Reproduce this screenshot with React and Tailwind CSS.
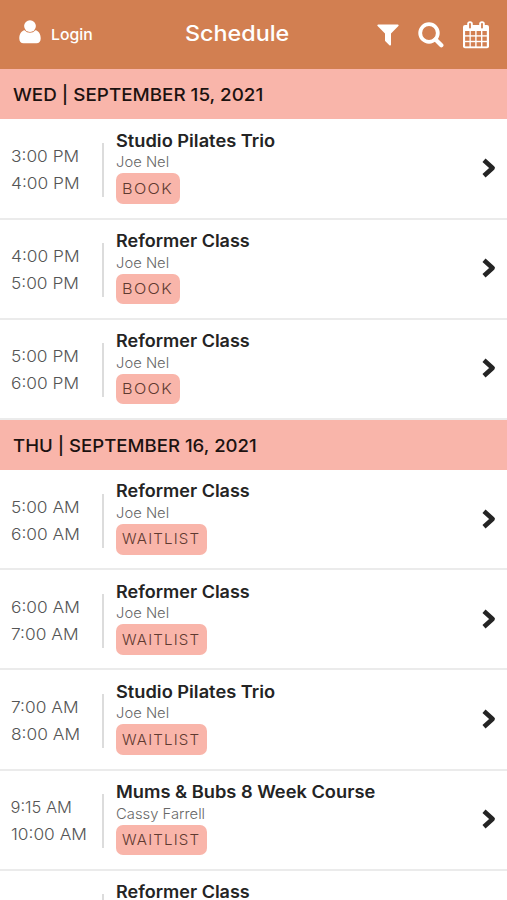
const DAYS = [
  {
    label: 'WED | SEPTEMBER 15, 2021',
    stretch: 'scale-x-[1.075]',
    classes: [
      { start: '3:00 PM', end: '4:00 PM', title: 'Studio Pilates Trio', teacher: 'Joe Nel', action: 'BOOK' },
      { start: '4:00 PM', end: '5:00 PM', title: 'Reformer Class', teacher: 'Joe Nel', action: 'BOOK' },
      { start: '5:00 PM', end: '6:00 PM', title: 'Reformer Class', teacher: 'Joe Nel', action: 'BOOK' },
    ],
  },
  {
    label: 'THU | SEPTEMBER 16, 2021',
    stretch: 'scale-x-[1.062]',
    classes: [
      { start: '5:00 AM', end: '6:00 AM', title: 'Reformer Class', teacher: 'Joe Nel', action: 'WAITLIST' },
      { start: '6:00 AM', end: '7:00 AM', title: 'Reformer Class', teacher: 'Joe Nel', action: 'WAITLIST' },
      { start: '7:00 AM', end: '8:00 AM', title: 'Studio Pilates Trio', teacher: 'Joe Nel', action: 'WAITLIST' },
      { start: '9:15 AM', end: '10:00 AM', title: 'Mums & Bubs 8 Week Course', teacher: 'Cassy Farrell', action: 'WAITLIST' },
      { title: 'Reformer Class' },
    ],
  },
];

function UserIcon() {
  return (
    <svg className="h-[24px] w-[22px]" viewBox="0 0 22 24" fill="currentColor">
      <path d="M5.6 10.2C2.2 10.8.3 14 .3 18.6c0 3.2 1.6 4.7 4.2 4.7h13c2.6 0 4.2-1.5 4.2-4.7 0-4.6-1.9-7.8-5.3-8.4a7 7 0 0 1-10.8 0Z" />
      <circle cx="11" cy="6.1" r="5.9" />
    </svg>
  );
}

function FilterIcon() {
  return (
    <svg className="h-[22px] w-[22px]" viewBox="0 0 22 22" fill="currentColor">
      <path d="M1.3.4h19.4c.9 0 1.3 1 .7 1.6L14 9.5v11c0 .9-1 1.3-1.6.7l-4-3.9a1 1 0 0 1-.4-.8v-7L.6 2C0 1.4.4.4 1.3.4Z" />
    </svg>
  );
}

function SearchIcon() {
  return (
    <svg className="h-[26px] w-[26px]" viewBox="0 0 26 26" fill="none" stroke="currentColor">
      <circle cx="11" cy="11" r="8.8" strokeWidth="3.8" />
      <path d="m17.5 17.5 5.8 5.7" strokeWidth="4.3" strokeLinecap="round" />
    </svg>
  );
}

function CalendarIcon() {
  return (
    <svg className="h-[28px] w-[26px]" viewBox="0 0 26 28">
      <rect x="0" y="4" width="26" height="23.3" rx="2" fill="#fff" />
      <g fill="#d27f51">
        {[10, 15.6, 21.2].map((y) =>
          [2.1, 7.8, 13.6, 19.4].map((x) => (
            <rect key={`${x}-${y}`} x={x} y={y} width="4.4" height="4.2" />
          ))
        )}
      </g>
      <g fill="#fff">
        <rect x="4.2" y=".2" width="5.6" height="9" rx="2.6" />
        <rect x="16.2" y=".2" width="5.6" height="9" rx="2.6" />
      </g>
      <g fill="#d27f51">
        <rect x="6.1" y="2" width="1.8" height="5.6" rx=".8" />
        <rect x="18.1" y="2" width="1.8" height="5.6" rx=".8" />
      </g>
    </svg>
  );
}

function Chevron() {
  return (
    <svg className="h-[20px] w-[14px]" viewBox="0 0 14 20" fill="none" stroke="#242424" strokeWidth="4.6" strokeLinejoin="round">
      <path d="m2 2.2 8.6 7.8L2 17.8" />
    </svg>
  );
}

function Time({ value }) {
  return (
    <span className={value === '9:15 AM' ? 'w-fit whitespace-nowrap' : 'w-fit origin-left scale-x-[1.05] whitespace-nowrap'}>
      {value}
    </span>
  );
}

function ClassRow({ item }) {
  const titleStretch = item.title === 'Reformer Class' ? 'scale-x-[1.06]' : 'scale-x-[1.073]';
  return (
    <li className="flex h-[100.2px] shrink-0 border-b-2 border-[#ebebeb] bg-white pl-[10.5px] pr-[11px]">
      <div className="mt-[23.5px] flex h-[54px] w-[93px] shrink-0 flex-col border-r-2 border-[#dcdcdc] text-[16.5px] font-light leading-[27px] text-[#555]">
        {item.start && <Time value={item.start} />}
        {item.end && <Time value={item.end} />}
      </div>
      <div className="ml-[12.5px] flex flex-1 flex-col items-start pt-[10.3px]">
        <h3 className={`origin-left whitespace-nowrap text-[17px] font-semibold leading-[22px] text-[#242424] ${titleStretch}`}>
          {item.title}
        </h3>
        {item.teacher && (
          <p className="-mt-[0.3px] origin-left scale-x-[1.02] text-[14.5px] font-light leading-[22px] text-[#686868]">{item.teacher}</p>
        )}
        {item.action === 'BOOK' && (
          <button className="h-[30.5px] w-[63.5px] rounded-[7px] bg-[#f9b5aa] pl-[6px] text-left text-[14.5px] font-light tracking-[1.2px] text-[#5f3a30]">
            <span className="inline-block origin-left scale-x-[1.12]">BOOK</span>
          </button>
        )}
        {item.action === 'WAITLIST' && (
          <button className="h-[30.5px] w-[90.5px] rounded-[7px] bg-[#f9b5aa] pl-[6px] text-left text-[14.5px] font-light tracking-[1.1px] text-[#5f3a30]">
            <span className="inline-block origin-left scale-x-[1.04]">WAITLIST</span>
          </button>
        )}
      </div>
      <div className="pt-[38.5px]">
        <Chevron />
      </div>
    </li>
  );
}

export default function App() {
  return (
    <div className="flex h-[900px] w-full flex-col overflow-hidden bg-white font-['Inter','Liberation_Sans',sans-serif]">
      <header className="flex h-[69px] shrink-0 items-center bg-[#d27f51] pl-[19px] pr-[18px] text-white">
        <div className="flex w-[165.5px] items-center">
          <div className="-mt-[5px]">
            <UserIcon />
          </div>
          <span className="ml-[9.5px] mt-[1px] origin-left scale-x-[1.05] text-[15px] font-medium">Login</span>
        </div>
        <h1 className="origin-left scale-x-[1.085] pb-[2px] text-[21.5px] font-medium">Schedule</h1>
        <div className="flex flex-1 items-center justify-end">
          <FilterIcon />
          <div className="ml-[19px]">
            <SearchIcon />
          </div>
          <div className="ml-[19px]">
            <CalendarIcon />
          </div>
        </div>
      </header>
      {DAYS.map((day) => (
        <section key={day.label} className="shrink-0">
          <h2 className="flex h-[50.4px] items-center bg-[#f9b5aa] pl-[12.5px] pt-[1.6px] text-[17.5px] font-medium text-[#1c1210]">
            <span className={`origin-left ${day.stretch}`}>{day.label}</span>
          </h2>
          <ul className="-mb-[0.3px]">
            {day.classes.map((item, i) => (
              <ClassRow key={i} item={item} />
            ))}
          </ul>
        </section>
      ))}
    </div>
  );
}
